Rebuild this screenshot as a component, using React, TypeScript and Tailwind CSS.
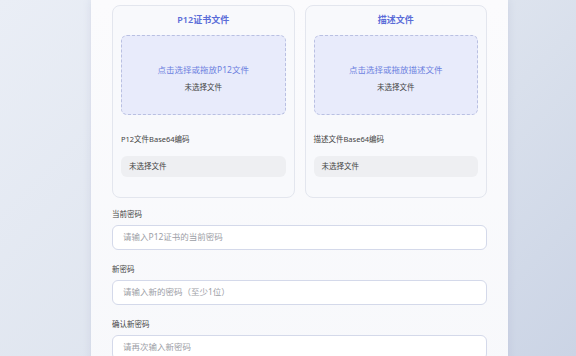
import React from "react";

const FONT = { fontFamily: '"Noto Sans", "Noto Sans CJK SC", sans-serif' };

function FileCard({ title, hint, label }: { title: string; hint: string; label: string }) {
  return (
    <div className="flex h-[193px] flex-col rounded-lg border border-[#e3e6ee] bg-[#f8f9fc] px-[8px] pt-[7px] pb-[20px]">
      <div className="text-center text-[9px] font-semibold leading-[14px] text-[#5a6cd8]">{title}</div>
      <div className="mt-[8px] flex h-[82px] flex-col items-center justify-center gap-[6px] rounded-md border border-dashed border-[#b9c0e2] bg-[#e8ebfb] pt-[6px]">
        <div className="text-[8.5px] leading-[12px] text-[#6c7fe0]">{hint}</div>
        <div className="text-[7.5px] leading-[10px] text-[#444]">未选择文件</div>
      </div>
      <div className="mt-[19px] text-[7.5px] leading-[10px] text-[#444]">{label}</div>
      <div className="mt-[12px] flex h-[21px] items-center rounded-md bg-[#eeeff2] pl-[8px] text-[7.5px] text-[#444]">
        未选择文件
      </div>
    </div>
  );
}

function Field({ label, placeholder, first }: { label: string; placeholder: string; first?: boolean }) {
  return (
    <div className={first ? "mt-[11px]" : "mt-[14px]"}>
      <div className="text-[7.5px] leading-[10px] text-[#444]">{label}</div>
      <div className="mt-[6px] flex h-[25px] items-center rounded-md border border-[#d4d9ea] bg-white pl-[10px] text-[8.5px] text-[#9c9ea6]">
        {placeholder}
      </div>
    </div>
  );
}

export default function App() {
  return (
    <div
      className="h-[356px] w-full overflow-hidden bg-[linear-gradient(135deg,#eaeef6_0%,#dfe5ef_50%,#cbd4e5_100%)]"
      style={FONT}
    >
      <div className="ml-[91px] h-[400px] w-[417px] bg-[linear-gradient(180deg,#fbfbfd,#f7f8fb)] px-[21px] pt-[5px] shadow-[0_0_8px_rgba(120,135,170,0.18)]">
        <div className="grid grid-cols-2 gap-[10px]">
          <FileCard title="P12证书文件" hint="点击选择或拖放P12文件" label="P12文件Base64编码" />
          <FileCard title="描述文件" hint="点击选择或拖放描述文件" label="描述文件Base64编码" />
        </div>
        <Field first label="当前密码" placeholder="请输入P12证书的当前密码" />
        <Field label="新密码" placeholder="请输入新的密码（至少1位）" />
        <Field label="确认新密码" placeholder="请再次输入新密码" />
      </div>
    </div>
  );
}
